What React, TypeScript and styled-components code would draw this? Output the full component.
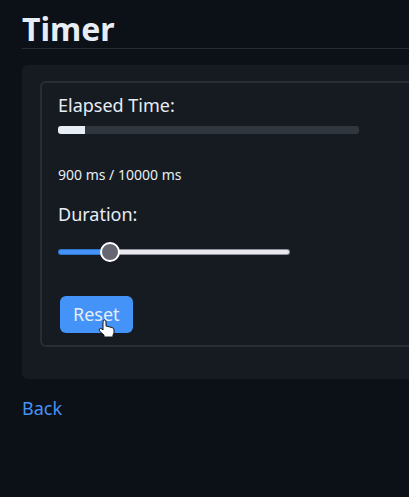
import React, { useState } from "react";
import styled, { createGlobalStyle } from "styled-components";

const GlobalStyle = createGlobalStyle`
  *, *::before, *::after { box-sizing: border-box; }
  body {
    margin: 0;
    min-height: 100vh;
    overflow: hidden;
    background: #0c1017;
    color: #e6edf5;
    font-family: "Noto Sans", sans-serif;
    font-size: 18px;
    line-height: 24px;
  }
`;

const Page = styled.main`
  display: flex;
  flex-direction: column;
  padding: 8px 0 0 22px;
`;

const Title = styled.h1`
  margin: 0 0 16px;
  height: 41px;
  border-bottom: 1px solid #292c33;
  font-size: 32px;
  font-weight: 700;
  line-height: 42px;
`;

const Card = styled.section`
  padding: 16px 0 32px 18px;
  border-radius: 6px 0 0 6px;
  background: #161b22;
`;

const Panel = styled.div`
  display: flex;
  flex-direction: column;
  align-items: flex-start;
  padding: 10px 16px 12px;
  border: 2px solid #292c34;
  border-right: 0;
  border-radius: 6px 0 0 6px;
`;

const Label = styled.label`
  display: block;
`;

const Meter = styled.progress`
  appearance: none;
  display: block;
  width: 100%;
  max-width: 301px;
  height: 8px;
  margin: 9px 0 29px;
  border: 0;
  border-radius: 3px;
  overflow: hidden;
  background: #30363d;

  &::-webkit-progress-bar { background: #30363d; }
  &::-webkit-progress-value { background: #e6edf5; }
`;

const Reading = styled.output`
  display: block;
  margin-bottom: 15px;
  font-size: 14px;
`;

const Slider = styled.input<{ $fill: number }>`
  appearance: none;
  display: block;
  width: 100%;
  max-width: 232px;
  height: 20px;
  margin: 16px 0 34px;
  background: transparent;
  cursor: pointer;

  &::-webkit-slider-runnable-track {
    height: 6px;
    border: 1px solid transparent;
    border-radius: 3px;
    background:
      linear-gradient(to right, #4493f8 ${(p) => p.$fill}%, #e9e9ed ${(p) => p.$fill}%) padding-box,
      linear-gradient(to right, #2f72cc ${(p) => p.$fill}%, #8f8f9d ${(p) => p.$fill}%) border-box;
  }

  &::-webkit-slider-thumb {
    appearance: none;
    width: 20px;
    height: 20px;
    margin-top: -8px;
    border: 2px solid #ffffff;
    border-radius: 50%;
    background: #676774;
  }
`;

const ResetButton = styled.button`
  position: relative;
  height: 37px;
  margin-left: 2px;
  padding: 0 13px 2px;
  border: 0;
  border-radius: 6px;
  background: #4493f8;
  color: #e6edf5;
  font: inherit;
  cursor: pointer;
`;

const Pointer = styled.svg`
  position: absolute;
  left: 38px;
  top: 23px;
  width: 17px;
  height: 19px;
`;

const BackLink = styled.a`
  align-self: flex-start;
  margin-top: 17px;
  color: #4493f8;
  text-decoration: none;
`;

export default function App() {
  const [elapsed, setElapsed] = useState(900);
  const [duration, setDuration] = useState(10000);
  const max = 47000;

  return (
    <>
      <GlobalStyle />
      <Page>
        <Title>Timer</Title>
        <Card>
          <Panel>
            <Label htmlFor="elapsed">Elapsed Time:</Label>
            <Meter id="elapsed" value={elapsed} max={duration} />
            <Reading htmlFor="duration">
              {`${elapsed} ms / ${duration} ms`}
            </Reading>
            <Label htmlFor="duration">Duration:</Label>
            <Slider
              id="duration"
              type="range"
              min={1000}
              max={max}
              step={1}
              value={duration}
              $fill={Math.round((duration / max) * 100)}
              onChange={(e: React.ChangeEvent<HTMLInputElement>) =>
                setDuration(Number(e.target.value))
              }
            />
            <ResetButton type="button" onClick={() => setElapsed(0)}>
              Reset
              <Pointer viewBox="0 0 17 19" aria-hidden="true">
                <path
                  d="M5 3Q5 1 6.500 1T8 3V7L14 8.500Q16 9 16 11V14L15 16V18H6V16L2 12.500Q0.500 11 1.500 10T4 10L5 11Z"
                  fill="#ffffff"
                  stroke="#14171d"
                  strokeWidth="1"
                  strokeLinejoin="round"
                />
              </Pointer>
            </ResetButton>
          </Panel>
        </Card>
        <BackLink href="#">Back</BackLink>
      </Page>
    </>
  );
}
